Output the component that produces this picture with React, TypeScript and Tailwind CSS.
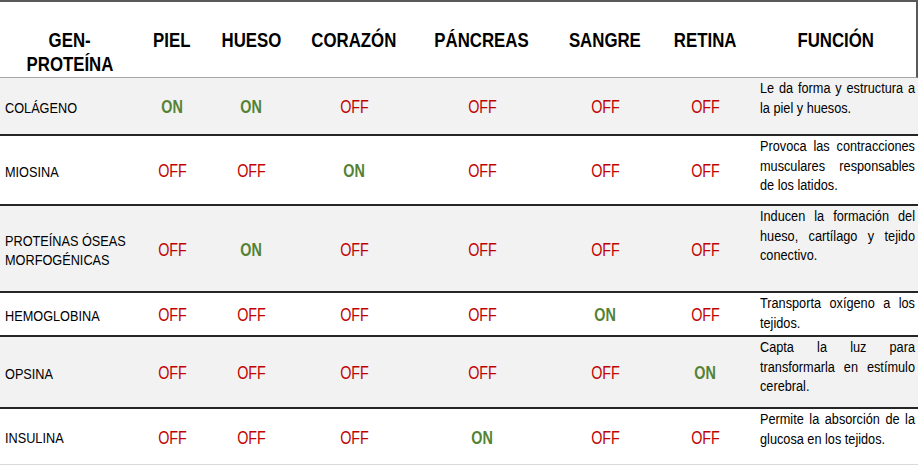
import React from "react";

type Row = {
  name: string[];
  vals: boolean[];
  fn: string;
  h: string;
  bg: string;
};

const rows: Row[] = [
  { name: ["COLÁGENO"], vals: [true, true, false, false, false, false], fn: "Le da forma y estructura a la piel y huesos.", h: "h-[58px]", bg: "bg-[#f2f2f2]" },
  { name: ["MIOSINA"], vals: [false, false, true, false, false, false], fn: "Provoca las contracciones musculares responsables de los latidos.", h: "h-[70px]", bg: "bg-white" },
  { name: ["PROTEÍNAS ÓSEAS", "MORFOGÉNICAS"], vals: [false, true, false, false, false, false], fn: "Inducen la formación del hueso, cartílago y tejido conectivo.", h: "h-[87px]", bg: "bg-[#f2f2f2]" },
  { name: ["HEMOGLOBINA"], vals: [false, false, false, false, true, false], fn: "Transporta oxígeno a los tejidos.", h: "h-[44px]", bg: "bg-white" },
  { name: ["OPSINA"], vals: [false, false, false, false, false, true], fn: "Capta la luz para transformarla en estímulo cerebral.", h: "h-[72px]", bg: "bg-[#f2f2f2]" },
  { name: ["INSULINA"], vals: [false, false, false, true, false, false], fn: "Permite la absorción de la glucosa en los tejidos.", h: "h-[56px]", bg: "bg-white" },
];

const heads = ["PIEL", "HUESO", "CORAZÓN", "PÁNCREAS", "SANGRE", "RETINA"];

const grid = "grid grid-cols-[140px_64px_94px_112px_144px_102px_98px_164px]";

function N({ children, origin = "origin-center", className = "" }: { children: React.ReactNode; origin?: string; className?: string }) {
  return <span className={`inline-block whitespace-nowrap scale-x-[0.82] ${origin} ${className}`}>{children}</span>;
}

export default function App() {
  return (
    <div
      className="w-[920px] h-[466px] bg-white text-black overflow-hidden"
      style={{ fontFamily: '"Liberation Sans", Arial, sans-serif' }}
    >
      <div className={`${grid} w-[918px] h-[78px] border-t-2 border-r-2 border-[#595959] border-b border-b-[#a6a6a6] font-bold text-[20.5px] leading-[24px]`}>
        <div className="pt-[26px] flex flex-col items-center">
          <N>GEN-</N>
          <N>PROTEÍNA</N>
        </div>
        {heads.map((h) => (
          <div key={h} className="pt-[26px] flex justify-center">
            <N>{h}</N>
          </div>
        ))}
        <div className="pt-[26px] flex justify-center">
          <N>FUNCIÓN</N>
        </div>
      </div>
      {rows.map((r, i) => (
        <div
          key={i}
          className={`${grid} w-[918px] ${r.h} ${r.bg} ${i === rows.length - 1 ? "border-b border-[#d9d9d9]" : "border-b-2 border-[#262626]"}`}
        >
          <div className="flex flex-col justify-center items-start pl-[5px] pt-[2px] text-[15.5px] leading-[19px]">
            {r.name.map((n) => (
              <N key={n} origin="origin-left">
                {n}
              </N>
            ))}
          </div>
          {r.vals.map((v, j) => (
            <div key={j} className="flex items-center justify-center pt-[3px] text-[17.5px]">
              {v ? (
                <N className="font-bold text-[#548235]">ON</N>
              ) : (
                <N className="text-[#c00000]">OFF</N>
              )}
            </div>
          ))}
          <div className="pl-[6px] overflow-visible">
            <div className="w-[189px] origin-top-left scale-x-[0.82] text-[15.5px] leading-[19.5px] text-justify">{r.fn}</div>
          </div>
        </div>
      ))}
    </div>
  );
}
